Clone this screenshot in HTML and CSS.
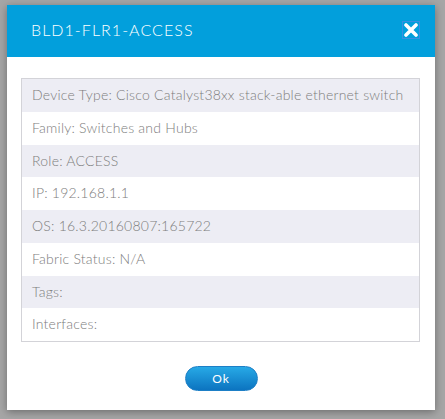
FILE: index.html
```html
<!DOCTYPE html>
<html lang="en">
<head>
<meta charset="UTF-8" />
<title>BLD1-FLR1-ACCESS</title>
<link rel="stylesheet" href="styles.css">
</head>
<body>

<div class="backdrop">
  <div class="modal">
    <div class="modal-header">
      <span class="modal-title">BLD1-FLR1-ACCESS</span>
      <button class="close-btn" aria-label="Close">
        <svg width="14" height="14" viewBox="0 0 14 14">
          <path d="M2 2 L12 12 M12 2 L2 12" stroke="#fff" stroke-width="3.6" stroke-linecap="round"/>
        </svg>
      </button>
    </div>

    <div class="modal-body">
      <div class="info-table">
        <div class="info-row">Device Type: Cisco Catalyst38xx stack-able ethernet switch</div>
        <div class="info-row">Family: Switches and Hubs</div>
        <div class="info-row">Role: ACCESS</div>
        <div class="info-row">IP: 192.168.1.1</div>
        <div class="info-row">OS: 16.3.20160807:165722</div>
        <div class="info-row">Fabric Status: N/A</div>
        <div class="info-row">Tags:</div>
        <div class="info-row">Interfaces:</div>
      </div>
    </div>

    <div class="modal-footer">
      <button class="ok-btn">Ok</button>
    </div>
  </div>
</div>

</body>
</html>
```

FILE: styles.css
```css
body {
  margin: 0;
  background: #a6a6a6;
  font-family: "Lato", "Open Sans", sans-serif;
  font-weight: 300;
}
.backdrop {
  height: 419px;
  padding: 5px 0 0 7px;
  box-sizing: border-box;
}
.modal {
  width: 428px;
  height: 405px;
  background: #fff;
  display: flex;
  flex-direction: column;
  box-shadow: 0 2px 8px rgba(0,0,0,0.35);
}
.modal-header {
  height: 52px;
  background: #029fdc;
  display: flex;
  align-items: center;
  justify-content: space-between;
  padding: 0 15px 3px 24px;
  box-sizing: border-box;
}
.modal-title {
  color: #fff;
  font-size: 16px;
  letter-spacing: 1.05px;
}
.close-btn {
  width: 18px;
  height: 18px;
  padding: 0;
  border: 1px solid #3b8fe0;
  background: transparent;
  display: flex;
  align-items: center;
  justify-content: center;
  cursor: pointer;
}
.modal-body {
  padding: 21px 15px 0 14px;
}
.info-table {
  border: 1px solid #d3d3d8;
}
.info-row {
  height: 32.75px;
  line-height: 32.75px;
  padding-left: 10px;
  font-size: 14px;
  letter-spacing: 0.23px;
  color: #7d7d7d;
  white-space: nowrap;
}
.info-row:nth-child(odd) {
  background: #ededf4;
}
.modal-footer {
  display: flex;
  justify-content: center;
  padding-top: 24px;
}
.ok-btn {
  width: 73px;
  height: 25px;
  border-radius: 13px;
  border: 1px solid #1d7fc6;
  background: linear-gradient(#27a9e6, #0c74c0);
  color: #fff;
  font-family: "Lato", sans-serif;
  font-size: 12px;
  font-weight: 400;
  letter-spacing: 1px;
  cursor: pointer;
}
```
